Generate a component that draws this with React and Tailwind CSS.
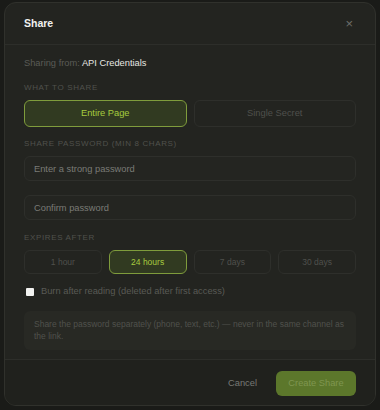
import { useState } from 'react';

const ShareModal = () => {
  const [scope, setScope] = useState('page');
  const [expiry, setExpiry] = useState('24h');
  const [burn, setBurn] = useState(false);

  const expiries = [
    { id: '1h', label: '1 hour' },
    { id: '24h', label: '24 hours' },
    { id: '7d', label: '7 days' },
    { id: '30d', label: '30 days' }
  ];

  const optionClass = (active) =>
    active
      ? 'border-[1.5px] border-[#7f9c3c] bg-[#313a21] text-[#a6cc3f]'
      : 'border border-[#2e2f2b] bg-[#232420] text-[#4f504c]';

  return (
    <div className="w-[372px] h-[404px] rounded-[12px] border border-[#30312c] bg-[#232420] flex flex-col overflow-hidden">
      {/* Header */}
      <div className="h-[42px] flex items-center justify-between pl-[19px] pr-[22px] border-b border-[#2d2e2a]">
        <h2 className="text-[10.5px] font-bold text-[#f0f0ee]">Share</h2>
        <button className="text-[#6d6e69] text-[13px] leading-none">×</button>
      </div>

      {/* Body */}
      <div className="flex-1 px-[19px] pt-[11px] border-b border-[#2d2e2a]">
        <p className="h-[14px] leading-[14px] text-[9.3px] text-[#5a5b56]">
          Sharing from: <span className="text-[#e6e6e2]">API Credentials</span>
        </p>

        <p className="mt-[12px] h-[12px] leading-[12px] text-[8px] tracking-[0.08em] uppercase text-[#50514c]">What to share</p>
        <div className="mt-[6px] grid grid-cols-2 gap-[7px]">
          <button
            onClick={() => setScope('page')}
            className={`h-[27px] rounded-[6px] text-[9.3px] ${optionClass(scope === 'page')}`}
          >
            Entire Page
          </button>
          <button
            onClick={() => setScope('secret')}
            className={`h-[27px] rounded-[6px] text-[9.3px] ${optionClass(scope === 'secret')}`}
          >
            Single Secret
          </button>
        </div>

        <p className="mt-[11px] h-[12px] leading-[12px] text-[8px] tracking-[0.08em] uppercase text-[#50514c]">Share password (min 8 chars)</p>
        <input
          type="password"
          placeholder="Enter a strong password"
          className="mt-[6px] block w-full h-[25px] rounded-[6px] border border-[#2e2f2b] bg-[#242521] px-[9px] text-[9.3px] text-[#ddd] placeholder:text-[#7a7b76] outline-none"
        />
        <input
          type="password"
          placeholder="Confirm password"
          className="mt-[14px] block w-full h-[25px] rounded-[6px] border border-[#2e2f2b] bg-[#242521] px-[9px] text-[9.3px] text-[#ddd] placeholder:text-[#7a7b76] outline-none"
        />

        <p className="mt-[12px] h-[12px] leading-[12px] text-[8px] tracking-[0.08em] uppercase text-[#50514c]">Expires after</p>
        <div className="mt-[6px] grid grid-cols-4 gap-[7px]">
          {expiries.map((item) => (
            <button
              key={item.id}
              onClick={() => setExpiry(item.id)}
              className={`h-[24px] rounded-[6px] text-[8.5px] ${optionClass(expiry === item.id)}`}
            >
              {item.label}
            </button>
          ))}
        </div>

        <label className="mt-[11px] h-[14px] flex items-center gap-[7px] pl-[2px] cursor-pointer">
          <span
            onClick={() => setBurn(!burn)}
            className={`w-[8px] h-[8px] rounded-[1px] ${burn ? 'bg-[#a6cc3f]' : 'bg-[#f2f2f0]'}`}
          />
          <span className="text-[9.3px] text-[#595a55]">Burn after reading (deleted after first access)</span>
        </label>

        <div className="mt-[12px] h-[39px] rounded-[6px] bg-[#282924] px-[10px] pt-[7px] text-[8.5px] leading-[12px] text-[#50514c]">
          Share the password separately (phone, text, etc.) — never in the same channel as the link.
        </div>
      </div>

      {/* Footer */}
      <div className="h-[45px] flex items-start justify-end gap-[19px] pt-[11px] px-[19px] bg-[#20211d]">
        <button className="h-[25px] text-[9.3px] text-[#787975]">Cancel</button>
        <button className="h-[25px] w-[80px] rounded-[6px] bg-[#5c772b] text-[9.3px] text-[#7f9650]">Create Share</button>
      </div>
    </div>
  );
};

export default function App() {
  return (
    <div
      className="w-[380px] h-[410px] bg-[#1a1b18] pl-[4px] pt-[2px]"
      style={{ fontFamily: '"Liberation Sans", Arial, sans-serif' }}
    >
      <ShareModal />
    </div>
  );
}
